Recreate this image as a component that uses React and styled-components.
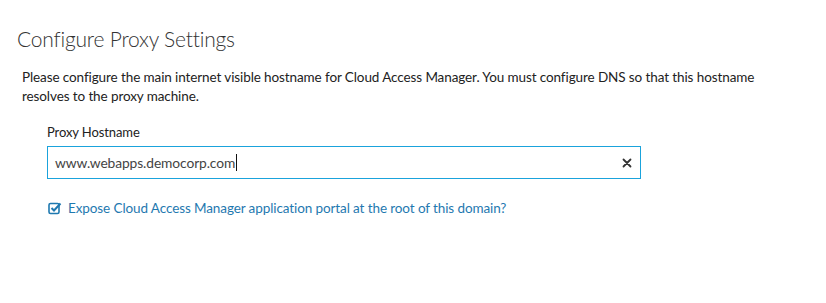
import React from "react";
import styled, { createGlobalStyle } from "styled-components";

const Global = createGlobalStyle`
  html, body { margin: 0; padding: 0; background: #fff; }
  body { font-family: "Lato", "Noto Sans", sans-serif; color: #333; }
`;

const Page = styled.div`
  padding: 25px 0 0 17px;
  width: 826px;
  height: 303px;
  box-sizing: border-box;
`;

const Title = styled.h1`
  margin: 0;
  font-size: 21px;
  letter-spacing: -0.2px;
  font-weight: 300;
  color: #333;
  line-height: 28px;
`;

const Intro = styled.p`
  margin: 15px 0 0 5px;
  font-size: 13.5px;
  letter-spacing: -0.1px;
  line-height: 19px;
  color: #222;
  width: 770px;
`;

const Field = styled.div`
  margin: 17px 0 0 30px;
  width: 594px;
  display: flex;
  flex-direction: column;
`;

const Label = styled.label`
  font-size: 13px;
  letter-spacing: -0.1px;
  color: #222;
  line-height: 18px;
  margin-bottom: 5px;
`;

const InputWrap = styled.div`
  display: flex;
  align-items: center;
  height: 33px;
  box-sizing: border-box;
  border: 1px solid #1aa3dc;
  padding: 0 8px 0 7px;
`;

const Input = styled.div`
  flex: 1;
  font-size: 13.8px;
  letter-spacing: -0.1px;
  color: #444;
  display: flex;
  align-items: center;
`;

const Caret = styled.span`
  display: inline-block;
  width: 1px;
  height: 17px;
  background: #111;
  margin-left: 1px;
`;

const Clear = styled.span`
  width: 10px;
  height: 10px;
  display: flex;
`;

const CheckRow = styled.div`
  display: flex;
  align-items: center;
  gap: 6px;
  margin-top: 21px;
  padding-left: 1px;
  color: #1f79b0;
  font-size: 13.5px;
  letter-spacing: -0.1px;
`;

export default function App() {
  return (
    <>
      <Global />
      <Page>
        <Title>Configure Proxy Settings</Title>
        <Intro>
          Please configure the main internet visible hostname for Cloud Access Manager. You must configure DNS so that this hostname resolves to the proxy machine.
        </Intro>
        <Field>
          <Label>Proxy Hostname</Label>
          <InputWrap>
            <Input>
              www.webapps.democorp.com<Caret />
            </Input>
            <Clear>
              <svg width="10" height="10" viewBox="0 0 10 10">
                <path d="M1.5 1.5L8.5 8.5M8.5 1.5L1.5 8.5" stroke="#333" strokeWidth="1.8" strokeLinecap="round" />
              </svg>
            </Clear>
          </InputWrap>
          <CheckRow>
            <svg width="14" height="14" viewBox="0 0 14 14">
              <rect x="1" y="2.5" width="10" height="10" rx="1.5" fill="none" stroke="#1f79b0" strokeWidth="1.6" />
              <path d="M3.5 7L6 9.5L12.5 2.5" fill="none" stroke="#1f79b0" strokeWidth="2" />
            </svg>
            <span>Expose Cloud Access Manager application portal at the root of this domain?</span>
          </CheckRow>
        </Field>
      </Page>
    </>
  );
}
